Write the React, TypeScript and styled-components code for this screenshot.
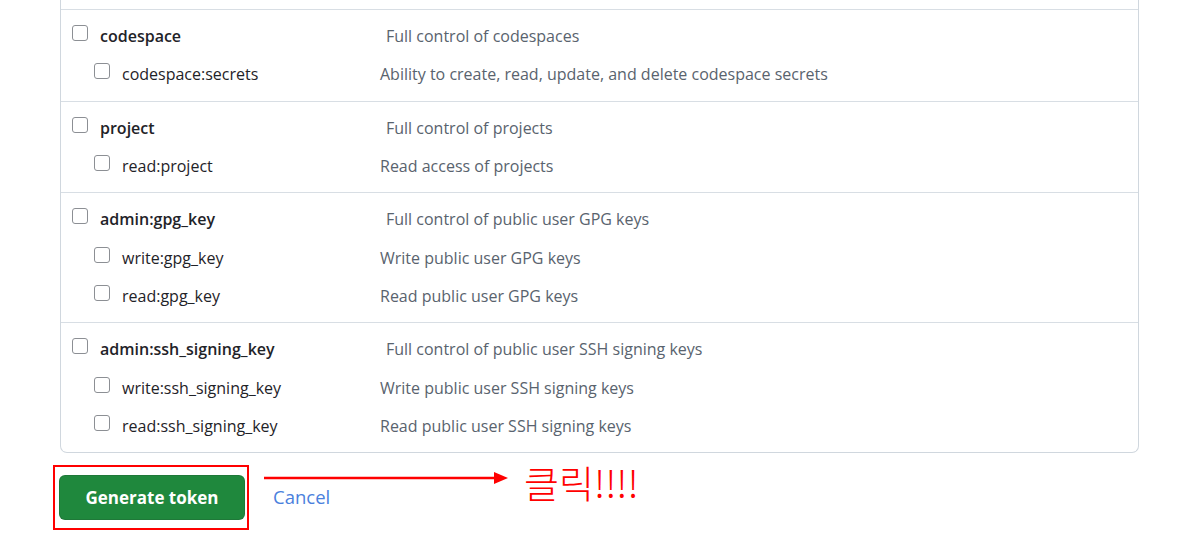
import React from "react";
import styled, { createGlobalStyle } from "styled-components";

interface iScope {
  name: string;
  description: string;
  children: { name: string; description: string }[];
}

const scopes: iScope[] = [
  {
    name: "codespace",
    description: "Full control of codespaces",
    children: [
      {
        name: "codespace:secrets",
        description: "Ability to create, read, update, and delete codespace secrets",
      },
    ],
  },
  {
    name: "project",
    description: "Full control of projects",
    children: [{ name: "read:project", description: "Read access of projects" }],
  },
  {
    name: "admin:gpg_key",
    description: "Full control of public user GPG keys",
    children: [
      { name: "write:gpg_key", description: "Write public user GPG keys" },
      { name: "read:gpg_key", description: "Read public user GPG keys" },
    ],
  },
  {
    name: "admin:ssh_signing_key",
    description: "Full control of public user SSH signing keys",
    children: [
      { name: "write:ssh_signing_key", description: "Write public user SSH signing keys" },
      { name: "read:ssh_signing_key", description: "Read public user SSH signing keys" },
    ],
  },
];

const App: React.FC = () => {
  return (
    <>
      <GlobalStyle />
      <Page>
        <Panel>
          {/* bottom of the group above, cut off by the screenshot */}
          <Clipped />
          {scopes.map((scope) => (
            <Group key={scope.name}>
              <Row>
                <Label>
                  <Check type="checkbox" />
                  <Name $parent>{scope.name}</Name>
                </Label>
                <Description>{scope.description}</Description>
              </Row>
              {scope.children.map((child) => (
                <Row key={child.name} $child>
                  <Label>
                    <Check type="checkbox" />
                    <Name>{child.name}</Name>
                  </Label>
                  <Description>{child.description}</Description>
                </Row>
              ))}
            </Group>
          ))}
        </Panel>

        <Actions>
          <Highlight>
            <GenerateButton>Generate token</GenerateButton>
          </Highlight>
          <CancelLink href="#">Cancel</CancelLink>

          <Annotation>
            <svg width="246" height="14" viewBox="0 0 246 14">
              <line x1="0" y1="7" x2="232" y2="7" stroke="#ff0000" strokeWidth="2.5" />
              <polygon points="230,1 244,7 230,13" fill="#ff0000" />
            </svg>
            <ClickText>클릭!!!!</ClickText>
          </Annotation>
        </Actions>
      </Page>
    </>
  );
};

export default App;

const GlobalStyle = createGlobalStyle`
  body {
    margin: 0;
    background: #ffffff;
    font-family: "Open Sans", "Noto Sans", sans-serif;
  }
`;

const Page = styled.div`
  width: 1194px;
  height: 553px;
  overflow: hidden;
  padding-left: 60px;
  box-sizing: border-box;
`;

const Panel = styled.div`
  width: 1079px;
  box-sizing: border-box;
  border: 1px solid #d0d7de;
  border-top: none;
  border-radius: 0 0 7px 7px;
`;

const Clipped = styled.div`
  height: 9px;
`;

const Group = styled.div`
  border-top: 1px solid #d8dee4;
  padding: 7px 0;
`;

const Row = styled.div<{ $child?: boolean }>`
  display: grid;
  grid-template-columns: ${(p) => (p.$child ? "286px" : "314px")} 1fr;
  align-items: center;
  height: 38.33px;
  padding-left: ${(p) => (p.$child ? "33px" : "11px")};
`;

const Label = styled.label`
  display: flex;
  align-items: center;
  gap: 12px;
`;

const Check = styled.input`
  appearance: none;
  margin: 0;
  width: 16px;
  height: 16px;
  border: 1.5px solid #8c8f94;
  border-radius: 3px;
  background: #fff;
  box-sizing: border-box;
  position: relative;
  top: -3px;
`;

const Name = styled.span<{ $parent?: boolean }>`
  font-size: 16px;
  font-weight: ${(p) => (p.$parent ? 600 : 400)};
  color: #1f2328;
`;

const Description = styled.span`
  font-size: 16px;
  color: #59636e;
`;

const Actions = styled.div`
  position: relative;
  display: flex;
  align-items: center;
  margin-left: -7px;
  margin-top: 12px;
`;

const Highlight = styled.div`
  border: 2px solid #ff0000;
  padding: 8px 2px 8px 4px;
`;

const GenerateButton = styled.button`
  width: 186px;
  height: 45px;
  background: #1f883d;
  border: 1px solid rgba(31, 35, 40, 0.15);
  border-radius: 6px;
  color: #ffffff;
  font-family: "Open Sans", "Noto Sans", sans-serif;
  font-size: 17px;
  font-weight: 700;
  cursor: pointer;
`;

const CancelLink = styled.a`
  margin-left: 24px;
  margin-top: -3px;
  font-size: 18.5px;
  color: #4a80dd;
  text-decoration: none;
`;

const Annotation = styled.div`
  position: absolute;
  left: 211px;
  top: 0;
  display: flex;
  align-items: flex-start;
  gap: 14px;

  svg {
    margin-top: 6px;
  }
`;

const ClickText = styled.span`
  font-family: "Noto Sans CJK KR", sans-serif;
  font-weight: 300;
  font-size: 38px;
  line-height: 44px;
  color: #ff0000;
  margin-top: -5px;
`;
